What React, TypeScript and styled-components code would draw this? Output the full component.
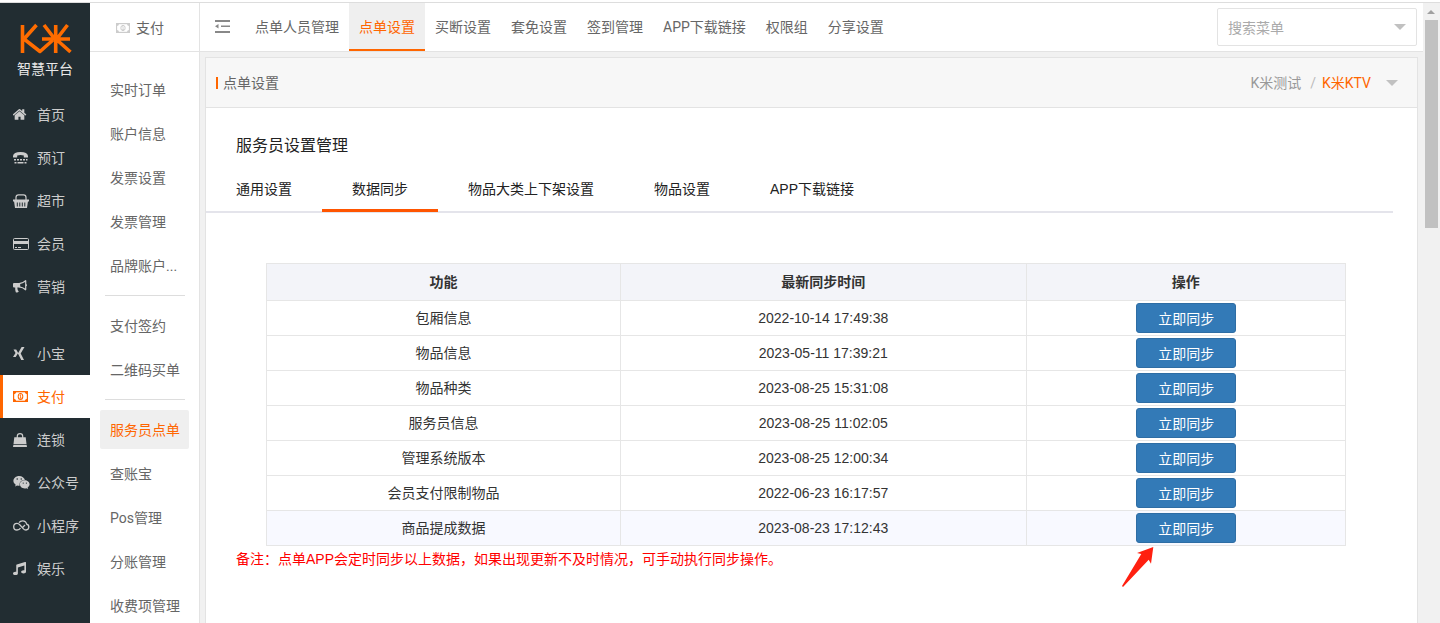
import React from 'react';
import styled, { createGlobalStyle, css } from 'styled-components';
import { FaMusic, FaWeixin } from 'react-icons/fa';

const GlobalStyle = createGlobalStyle`
  *, *::before, *::after { box-sizing: border-box; }
  body {
    margin: 0;
    overflow: hidden;
    background: #f1f1f1;
    color: #333;
    font: 14px/20px "Liberation Sans", "Noto Sans CJK SC", sans-serif;
  }
  a { color: inherit; text-decoration: none; }
  ul { list-style: none; margin: 0; padding: 0; }
  button, input { font: inherit; }
`;

const uiFont = css`
  font-family: Roboto, "Noto Sans CJK SC", sans-serif;
`;

const Page = styled.div`
  display: flex;
  flex-direction: column;
  height: 100vh;
`;

const TopStrip = styled.div`
  flex: none;
  height: 3px;
  background: #fff;
  border-bottom: 1px solid #ddd;
`;

const Shell = styled.div`
  display: flex;
  flex: 1;
  min-height: 0;
`;

/* Primary navigation */

const Sidebar = styled.nav`
  ${uiFont}
  flex: none;
  width: 90px;
  background: #222d32;
  color: #ccc;
  overflow: hidden;
`;

const Brand = styled.a`
  display: flex;
  flex-direction: column;
  align-items: center;
  height: 90px;
  padding-top: 20px;
  color: #e8e8e8;
  svg { margin-left: 2px; }
`;

const BrandName = styled.span`
  margin-top: 4px;
`;

const SideLink = styled.a<{ $active?: boolean }>`
  display: flex;
  align-items: center;
  gap: 8px;
  height: 43px;
  padding-left: 10px;
  border-left: 3px solid ${p => (p.$active ? '#ff6600' : 'transparent')};
  background: ${p => (p.$active ? '#fff' : 'transparent')};
  color: ${p => (p.$active ? '#ff6600' : 'inherit')};
  white-space: nowrap;
`;

const IconSlot = styled.span`
  display: flex;
  align-items: center;
  width: 16px;
  svg { flex: none; }
`;

const SideGroup = styled.ul`
  & + & { margin-top: 24px; }
`;

/* Secondary navigation */

const SubNav = styled.nav`
  ${uiFont}
  flex: none;
  width: 110px;
  background: #fff;
  border-right: 1px solid #e3e3e3;
  color: #666;
  overflow: hidden;
`;

const SubTitle = styled.div`
  display: flex;
  align-items: center;
  gap: 6px;
  height: 49px;
  padding: 2px 0 0 26px;
  border-bottom: 1px solid #e3e3e3;
  svg { color: #ccc; }
`;

const SubGroups = styled.div`
  padding: 8px 10px 0;
`;

const SubList = styled.ul`
  display: flex;
  flex-direction: column;
  gap: 5px;
  padding: 10px 0;
`;

const SubRule = styled.hr`
  height: 1px;
  margin: 0 4px 0 5px;
  border: 0;
  background: #ddd;
`;

const SubLink = styled.a<{ $active?: boolean }>`
  display: block;
  height: 39px;
  padding: 0 9px 0 10px;
  border-radius: 2px;
  line-height: 40px;
  background: ${p => (p.$active ? '#efefef' : 'transparent')};
  color: ${p => (p.$active ? '#ff6600' : 'inherit')};
  white-space: nowrap;
`;

/* Header */

const Main = styled.div`
  display: flex;
  flex-direction: column;
  flex: 1;
  min-width: 0;
`;

const Header = styled.header`
  ${uiFont}
  display: flex;
  flex: none;
  align-items: stretch;
  height: 49px;
  padding-right: 6px;
  background: #fff;
  border-bottom: 1px solid #e3e3e3;
  color: #666;
`;

const FoldButton = styled.button`
  display: flex;
  align-items: center;
  width: 45px;
  padding: 0 15px;
  border: 0;
  background: none;
  color: #888;
`;

const TopMenu = styled.nav`
  display: flex;
  flex: 1;
`;

const TopLink = styled.a<{ $active?: boolean }>`
  display: flex;
  align-items: center;
  padding: 2px 10px 0;
  border-bottom: 2px solid ${p => (p.$active ? '#ff6600' : 'transparent')};
  background: ${p => (p.$active ? '#efefef' : 'transparent')};
  color: ${p => (p.$active ? '#ff6600' : 'inherit')};
  white-space: nowrap;
`;

const SearchBox = styled.label`
  display: flex;
  align-items: center;
  align-self: center;
  width: 200px;
  height: 38px;
  padding: 0 10px;
  border: 1px solid #e3e3e3;
  border-radius: 2px;
`;

const SearchInput = styled.input`
  flex: 1;
  min-width: 0;
  padding: 1px 0 0;
  border: 0;
  outline: 0;
  background: none;
  color: #666;
  &::placeholder { color: #aaa; }
`;

const Caret = styled.span`
  width: 0;
  border: 6px solid transparent;
  border-top-color: #c1c1c1;
  border-bottom: 0;
`;

/* Content panel */

const Panel = styled.main`
  flex: 1;
  min-height: 0;
  margin: 5px 5px 0;
  background: #fff;
  border: 1px solid #e3e3e3;
  border-bottom: 0;
`;

const PanelHeader = styled.div`
  ${uiFont}
  display: flex;
  align-items: center;
  justify-content: space-between;
  height: 50px;
  padding: 0 19px 0 10px;
  background: #f7f7f7;
  border-bottom: 1px solid #e3e3e3;
  color: #666;
`;

const PanelTitle = styled.h1`
  display: flex;
  align-items: center;
  gap: 5px;
  margin: 0;
  font-size: 14px;
  font-weight: 400;
  &::before {
    content: '';
    width: 2px;
    height: 12px;
    background: #ff6600;
  }
`;

const StorePicker = styled.button`
  display: flex;
  align-items: center;
  padding: 0;
  border: 0;
  background: none;
  color: #999;
`;

const Slash = styled.span`
  margin: 0 6px 0 9px;
  color: #bbb;
`;

const Store = styled.span`
  margin-right: 15px;
  color: #ff6600;
`;

const Body = styled.div`
  padding: 27px 24px 0 0;
`;

const SectionTitle = styled.h2`
  margin: 0;
  padding-left: 30px;
  color: #222;
  font-size: 16px;
  font-weight: 400;
  line-height: 22px;
`;

const Tabs = styled.div`
  display: flex;
  height: 56px;
  border-bottom: 2px solid #e4e4eb;
`;

const Tab = styled.button<{ $active?: boolean }>`
  height: 55px;
  padding: 11px 30px 0;
  border: 0;
  border-bottom: 3px solid ${p => (p.$active ? '#ff5500' : 'transparent')};
  background: none;
  color: #222;
  white-space: nowrap;
`;

const TableArea = styled.div`
  padding: 50px 47px 0 60px;
`;

const Table = styled.table`
  width: 100%;
  table-layout: fixed;
  border-collapse: collapse;
  text-align: center;
  th, td { border: 1px solid #e6e6e6; }
  th {
    height: 37px;
    padding: 0;
    background: #f3f4f9;
  }
  td { padding: 2px; }
`;

const Column = styled.col<{ $share: number }>`
  width: ${p => p.$share}%;
`;

const Row = styled.tr<{ $hover?: boolean }>`
  background: ${p => (p.$hover ? '#f8f9ff' : '#fff')};
`;

const Action = styled.div`
  position: relative;
  width: 100px;
  margin: 0 auto;
`;

const SyncButton = styled.button`
  display: block;
  width: 100%;
  height: 30px;
  padding: 1px 0 0 1px;
  border: 1px solid #2e6da4;
  border-radius: 3px;
  background: #337ab7;
  color: #fff;
`;

const Pointer = styled.svg`
  position: absolute;
  top: 33px;
  left: -16px;
  pointer-events: none;
`;

const Note = styled.p`
  margin: 3px 0 0;
  padding-left: 30px;
  color: #f00;
`;

/* Scroll track */

const Track = styled.div`
  display: flex;
  flex: none;
  flex-direction: column;
  align-items: center;
  width: 17px;
  padding-top: 7px;
  padding-right: 1px;
  background: #f1f1f1;
  &::before {
    content: '';
    border: 4px solid transparent;
    border-top: 0;
    border-bottom-color: #a0a0a0;
  }
`;

const Thumb = styled.div`
  width: 13px;
  height: 34%;
  margin-top: 6px;
  background: #c1c1c1;
`;

/* Icons */

const HomeIcon = () => (
  <svg width="15" height="15" viewBox="120 0 1792 1792" fill="currentColor">
    <path d="M1472 992v480q0 26-19 45t-45 19h-384v-384h-256v384h-384q-26 0-45-19t-19-45v-480q0-1 .5-3t.5-3l575-474 575 474q1 2 1 6zm223-69l-62 74q-8 9-21 11h-3q-13 0-21-7l-692-577-692 577q-12 8-24 7-13-2-21-11l-62-74q-8-10-7-23.500t11-21.500l719-599q32-26 76-26t76 26l244 204v-195q0-14 9-23t23-9h192q14 0 23 9t9 23v408l219 182q10 8 11 21.500t-7 23.500z" />
  </svg>
);

const PhoneIcon = () => (
  <svg width="15" height="12" viewBox="0 0 15 12" fill="currentColor">
    <path d="M0 5V4Q.5 0 7.500 0T15 4v1q0 .6-.6.600h-3q-.6 0-.6-.6V3.500q-3.300-.8-6.600 0V5q0 .6-.6.600h-3Q0 5.600 0 5z" />
    <path d="M1 7h2v1.500H1zM4 7h2v1.500H4zM7 7h2v1.500H7zM10 7h2v1.500h-2zM13 7h1.500v1.500H13zM1.500 10h2v1.500h-2zM4.500 10h6v1.500h-6zM11.500 10h2v1.500h-2z" />
  </svg>
);

const BasketIcon = () => (
  <svg width="16" height="14" viewBox="0 0 16 14" fill="none" stroke="currentColor">
    <path d="M3 6V3.500Q3 .8 5.500.8h5Q13 .8 13 3.500V6" strokeWidth="1.200" />
    <path d="M0 5.500h16v2H0z" fill="currentColor" stroke="none" />
    <path fillRule="evenodd" d="M1 7h14l-1 7H2zM3.800 8.500v4h1v-4zm2.500 0v4h1v-4zm2.500 0v4h1v-4zm2.500 0v4h1v-4z" fill="currentColor" stroke="none" />
  </svg>
);

const CardIcon = () => (
  <svg width="16" height="12" viewBox="0 0 16 12" fill="none" stroke="currentColor">
    <rect x=".5" y=".5" width="15" height="11" rx="1" />
    <path d="M1 4.500h14" strokeWidth="3" />
    <path d="M2 9.500h2M5 9.500h3" />
  </svg>
);

const HornIcon = () => (
  <svg width="14" height="13" viewBox="0 0 14 13" fill="currentColor">
    <path d="M0 4q0-1 1-1h5.500v4.500H4.300Q4.200 9.500 5.800 11.500 4.500 13 2.800 12.200 2 9.700 2.200 7.500H1q-1 0-1-1z" />
    <path fillRule="evenodd" d="M6 3Q9.500 3 12.500 0q.8 0 .8.800v3.300q.7.300.7 1.100t-.7 1.100v3.300q0 .8-.8.800Q9.500 7.500 6 7.500zM7.200 4v2.500q2.500.3 4.900 2V2q-2.400 1.700-4.900 2z" />
  </svg>
);

const CrossIcon = () => (
  <svg width="12" height="13" viewBox="0 0 12 13" fill="currentColor">
    <path d="M.5 2.500h2.700L5.200 6l-2.500 4H0l2.500-4zM8.600 0h2.900L7.700 6.500l3.300 6.500H8.200L4.900 6.500z" />
  </svg>
);

const BagIcon = () => (
  <svg width="14" height="14" viewBox="0 0 14 14" fill="currentColor">
    <path d="M4.300 6V3.200Q4.300.6 7 .6t2.700 2.600V6" fill="none" stroke="currentColor" strokeWidth="1.200" />
    <path d="M1.300 4.200h11.400L13.500 11H.5zM.4 11.700h13.200L14 14H0z" />
  </svg>
);

const MoneyIcon = ({ size = 15 }: { size?: number }) => (
  <svg width={size} height={size === 15 ? 11 : 10} viewBox="0 0 15 10" preserveAspectRatio="none" fill="none" stroke="currentColor">
    <rect x=".6" y=".6" width="13.800" height="8.800" strokeWidth="1.200" />
    <path d="M1 1h2.200Q3 2.800 1 3zM14 1h-2.200Q12 2.800 14 3zM1 9h2.200Q3 7.200 1 7zM14 9h-2.200Q12 7.200 14 7z" fill="currentColor" stroke="none" />
    <ellipse cx="7.500" cy="5" rx="2.300" ry="2.700" />
    <path d="M6.700 3.900l.9-.5v3M6.600 6.500h2" strokeWidth=".8" />
  </svg>
);

const LoopIcon = () => (
  <svg width="17" height="11" viewBox="0 0 17 11" fill="none" stroke="currentColor" strokeWidth="1.300">
    <path d="M7.500 8.200Q6.300 10 4 10A3.300 3.300 0 0 1 4 3.400Q5.500 3.400 7 5l3.200 3.600Q11.400 10 13 10a3 3 0 0 0 .6-5.900Q13 .8 9.600.8 7.200.8 6 2.700M9.500 7.500 12 5" />
  </svg>
);

const FoldIcon = () => (
  <svg width="15" height="14" viewBox="0 0 15 14" fill="currentColor">
    <path d="M0 0h15v2H0zM6 5.500h9v1.500H6zM0 11h15v2H0zM0 6.300 3.500 4v4.600z" />
  </svg>
);

const Logo = () => (
  <svg width="52" height="32" viewBox="0 0 52 32" fill="none" stroke="#ff6c00" strokeWidth="3.600" strokeLinejoin="round">
    <path d="M2.500 2v28M16.500 2 4 16l16 12.500 13-11.500" />
    <path d="M22 16h28M35.700 2v28M24 2l10 13M47.500 2l-10 13M37 17l13.500 12" />
  </svg>
);

const sideGroups = [
  [
    { label: '首页', icon: <HomeIcon /> },
    { label: '预订', icon: <PhoneIcon /> },
    { label: '超市', icon: <BasketIcon /> },
    { label: '会员', icon: <CardIcon /> },
    { label: '营销', icon: <HornIcon /> },
  ],
  [
    { label: '小宝', icon: <CrossIcon /> },
    { label: '支付', icon: <MoneyIcon />, active: true },
    { label: '连锁', icon: <BagIcon /> },
    { label: '公众号', icon: <FaWeixin size={17} /> },
    { label: '小程序', icon: <LoopIcon /> },
    { label: '娱乐', icon: <FaMusic size={13} /> },
  ],
];

const subGroups = [
  ['实时订单', '账户信息', '发票设置', '发票管理', '品牌账户...'],
  ['支付签约', '二维码买单'],
  ['服务员点单', '查账宝', 'Pos管理', '分账管理', '收费项管理'],
];

const topMenu = ['点单人员管理', '点单设置', '买断设置', '套免设置', '签到管理', 'APP下载链接', '权限组', '分享设置'];

const tabs = ['通用设置', '数据同步', '物品大类上下架设置', '物品设置', 'APP下载链接'];

const rows = [
  ['包厢信息', '2022-10-14 17:49:38'],
  ['物品信息', '2023-05-11 17:39:21'],
  ['物品种类', '2023-08-25 15:31:08'],
  ['服务员信息', '2023-08-25 11:02:05'],
  ['管理系统版本', '2023-08-25 12:00:34'],
  ['会员支付限制物品', '2022-06-23 16:17:57'],
  ['商品提成数据', '2023-08-23 17:12:43'],
];

export default function App() {
  return (
    <Page>
      <GlobalStyle />
      <TopStrip />
      <Shell>
        <Sidebar>
          <Brand href="#">
            <Logo />
            <BrandName>智慧平台</BrandName>
          </Brand>
          {sideGroups.map((group, i) => (
            <SideGroup key={i}>
              {group.map(item => (
                <li key={item.label}>
                  <SideLink href="#" $active={'active' in item}>
                    <IconSlot>{item.icon}</IconSlot>
                    {item.label}
                  </SideLink>
                </li>
              ))}
            </SideGroup>
          ))}
        </Sidebar>

        <SubNav>
          <SubTitle>
            <MoneyIcon size={14} />
            支付
          </SubTitle>
          <SubGroups>
            {subGroups.map((group, i) => (
              <React.Fragment key={i}>
                {i > 0 && <SubRule />}
                <SubList>
                  {group.map(label => (
                    <li key={label}>
                      <SubLink href="#" $active={label === '服务员点单'}>{label}</SubLink>
                    </li>
                  ))}
                </SubList>
              </React.Fragment>
            ))}
          </SubGroups>
        </SubNav>

        <Main>
          <Header>
            <FoldButton type="button" aria-label="收起菜单"><FoldIcon /></FoldButton>
            <TopMenu>
              {topMenu.map(label => (
                <TopLink key={label} href="#" $active={label === '点单设置'}>{label}</TopLink>
              ))}
            </TopMenu>
            <SearchBox>
              <SearchInput type="text" placeholder="搜索菜单" aria-label="搜索菜单" />
              <Caret />
            </SearchBox>
          </Header>

          <Panel>
            <PanelHeader>
              <PanelTitle>点单设置</PanelTitle>
              <StorePicker type="button">
                K米测试<Slash>/</Slash><Store>K米KTV</Store><Caret />
              </StorePicker>
            </PanelHeader>
            <Body>
              <SectionTitle>服务员设置管理</SectionTitle>
              <Tabs role="tablist">
                {tabs.map(label => (
                  <Tab key={label} type="button" role="tab" aria-selected={label === '数据同步'} $active={label === '数据同步'}>
                    {label}
                  </Tab>
                ))}
              </Tabs>
              <TableArea>
                <Table>
                  <colgroup>
                    <Column $share={32.8} />
                    <Column $share={37.6} />
                    <Column $share={29.6} />
                  </colgroup>
                  <thead>
                    <tr>
                      <th scope="col">功能</th>
                      <th scope="col">最新同步时间</th>
                      <th scope="col">操作</th>
                    </tr>
                  </thead>
                  <tbody>
                    {rows.map(([name, time], i) => {
                      const last = i === rows.length - 1;
                      return (
                        <Row key={name} $hover={last}>
                          <td>{name}</td>
                          <td>{time}</td>
                          <td>
                            <Action>
                              <SyncButton type="button">立即同步</SyncButton>
                              {last && (
                                <Pointer width="36" height="42" viewBox="0 0 36 42" fill="#ff2010" aria-hidden="true">
                                  <path d="M33.300 1 17 7l4.300 1L2 40l1 1 25.700-27.300L31 17.700z" />
                                </Pointer>
                              )}
                            </Action>
                          </td>
                        </Row>
                      );
                    })}
                  </tbody>
                </Table>
              </TableArea>
              <Note>备注：点单APP会定时同步以上数据，如果出现更新不及时情况，可手动执行同步操作。</Note>
            </Body>
          </Panel>
        </Main>

        <Track aria-hidden="true"><Thumb /></Track>
      </Shell>
    </Page>
  );
}
